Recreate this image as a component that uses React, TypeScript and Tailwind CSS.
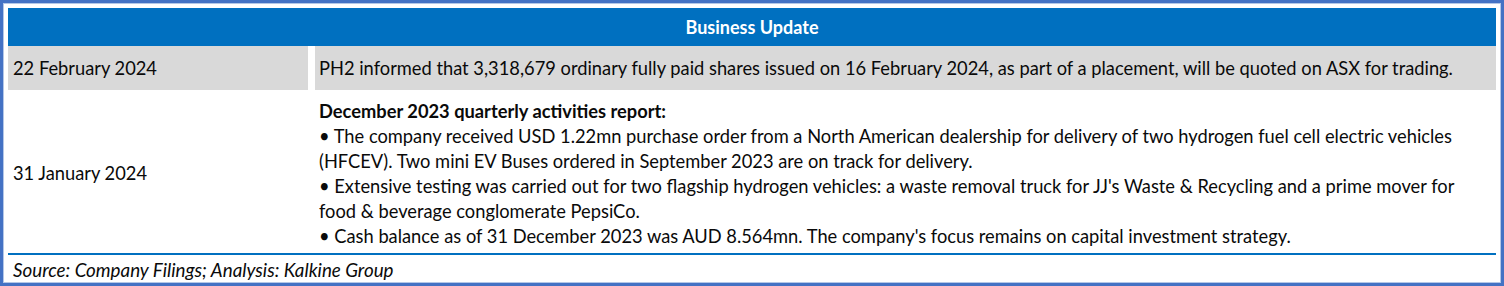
import React from 'react';

const bullets = [
  '• The company received USD 1.22mn purchase order from a North American dealership for delivery of two hydrogen fuel cell electric vehicles (HFCEV). Two mini EV Buses ordered in September 2023 are on track for delivery.',
  "• Extensive testing was carried out for two flagship hydrogen vehicles: a waste removal truck for JJ's Waste & Recycling and a prime mover for food & beverage conglomerate PepsiCo.",
  "• Cash balance as of 31 December 2023 was AUD 8.564mn. The company's focus remains on capital investment strategy.",
];

const App: React.FC = () => {
  return (
    <div className="w-[1504px] h-[286px] bg-white" style={{ fontFamily: 'Lato, "Open Sans", sans-serif' }}>
      <div className="w-full h-full border-[3px] border-[#4472c4]">
        <div className="w-full h-full border border-[#b4c7e7] px-[4px] pt-[4px] flex flex-col text-[18.3px] text-[#0a0a0a] leading-[25px]">
          <div className="h-[38px] bg-[#0070c0] text-white font-bold flex items-center justify-center text-[18px]">
            Business Update
          </div>

          <div className="h-[44px] grid grid-cols-[300px_1fr] gap-[7px]">
            <div className="bg-[#d9d9d9] flex items-center pl-[5px]">22 February 2024</div>
            <div className="bg-[#d9d9d9] flex items-center pl-[4px]">
              PH2 informed that 3,318,679 ordinary fully paid shares issued on 16 February 2024, as part of a placement, will be quoted on ASX for trading.
            </div>
          </div>

          <div className="h-[163px] grid grid-cols-[300px_1fr] gap-[7px]">
            <div className="flex items-center pl-[5px] pt-[3px]">31 January 2024</div>
            <div className="pl-[4px] pt-[9px] pr-[30px]">
              <p className="font-bold">December 2023 quarterly activities report:</p>
              {bullets.map((b) => (
                <p key={b}>{b}</p>
              ))}
            </div>
          </div>

          <div className="h-[2px] bg-[#0070c0]" />
          <div className="pl-[5px] pt-[2px] italic text-[18.8px]">Source: Company Filings; Analysis: Kalkine Group</div>
        </div>
      </div>
    </div>
  );
};

export default App;
